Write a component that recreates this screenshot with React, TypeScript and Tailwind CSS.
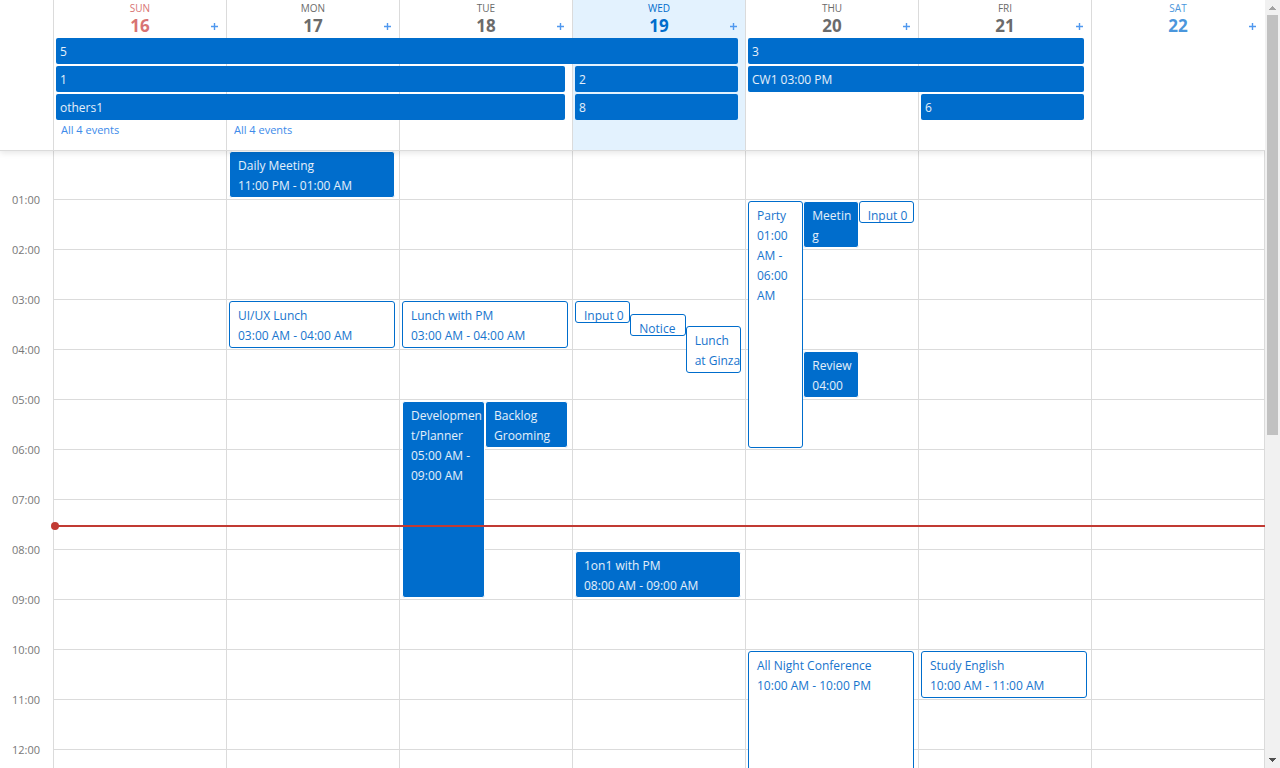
import { Fragment } from 'react';

type Day = { name: string; date: number; tone: string; head: string; more?: string };
type AllDay = { title: string; start: number; span: number; row: number };
type CalEvent = {
  title: string;
  time?: string;
  start: number;
  length: number;
  track: number;
  tracks: number;
  filled?: boolean;
};

const DAYS: Day[] = [
  { name: 'SUN', date: 16, tone: 'text-[#d87373]', head: 'bg-white', more: 'All 4 events' },
  { name: 'MON', date: 17, tone: 'text-[#6b6b6b]', head: 'bg-white', more: 'All 4 events' },
  { name: 'TUE', date: 18, tone: 'text-[#6b6b6b]', head: 'bg-white' },
  { name: 'WED', date: 19, tone: 'text-[#006dcc]', head: 'bg-[#e3f2fe]' },
  { name: 'THU', date: 20, tone: 'text-[#6b6b6b]', head: 'bg-white' },
  { name: 'FRI', date: 21, tone: 'text-[#6b6b6b]', head: 'bg-white' },
  { name: 'SAT', date: 22, tone: 'text-[#4a96dc]', head: 'bg-white' },
];

const ALL_DAY: AllDay[] = [
  { title: '5', start: 1, span: 4, row: 2 },
  { title: '3', start: 5, span: 2, row: 2 },
  { title: '1', start: 1, span: 3, row: 3 },
  { title: '2', start: 4, span: 1, row: 3 },
  { title: 'CW1 03:00 PM', start: 5, span: 2, row: 3 },
  { title: 'others1', start: 1, span: 3, row: 4 },
  { title: '8', start: 4, span: 1, row: 4 },
  { title: '6', start: 6, span: 1, row: 4 },
];

const EVENTS: CalEvent[][] = [
  [],
  [
    { title: 'Daily Meeting', time: '11:00 PM - 01:00 AM', start: 0, length: 1, track: 0, tracks: 1, filled: true },
    { title: 'UI/UX Lunch', time: '03:00 AM - 04:00 AM', start: 3, length: 1, track: 0, tracks: 1 },
  ],
  [
    { title: 'Lunch with PM', time: '03:00 AM - 04:00 AM', start: 3, length: 1, track: 0, tracks: 1 },
    { title: 'Development/Planner', time: '05:00 AM - 09:00 AM', start: 5, length: 4, track: 0, tracks: 2, filled: true },
    { title: 'Backlog Grooming', start: 5, length: 1, track: 1, tracks: 2, filled: true },
  ],
  [
    { title: 'Input 0', start: 3, length: 0.5, track: 0, tracks: 3 },
    { title: 'Notice', start: 3.25, length: 0.5, track: 1, tracks: 3 },
    { title: 'Lunch\nat Ginza', start: 3.5, length: 1, track: 2, tracks: 3 },
    { title: '1on1 with PM', time: '08:00 AM - 09:00 AM', start: 8, length: 1, track: 0, tracks: 1, filled: true },
  ],
  [
    { title: 'Party', time: '01:00 AM - 06:00 AM', start: 1, length: 5, track: 0, tracks: 3 },
    { title: 'Meeting', start: 1, length: 1, track: 1, tracks: 3, filled: true },
    { title: 'Input 0', start: 1, length: 0.5, track: 2, tracks: 3 },
    { title: 'Review', time: '04:00', start: 4, length: 1, track: 1, tracks: 3, filled: true },
    { title: 'All Night Conference', time: '10:00 AM - 10:00 PM', start: 10, length: 12, track: 0, tracks: 1 },
  ],
  [{ title: 'Study English', time: '10:00 AM - 11:00 AM', start: 10, length: 1, track: 0, tracks: 1 }],
  [],
];

const HOURS = Array.from({ length: 12 }, (_, i) => `${String(i + 1).padStart(2, '0')}:00`);

function Header() {
  return (
    <header className="relative z-20 flex border-b border-[#dbdbdb] bg-white shadow-[0_2px_6px_rgba(0,0,0,0.1)]">
      <div className="w-[53px] shrink-0" />
      <div className="grid min-w-0 flex-1 grid-cols-7 grid-rows-[38px_28px_28px_28px_28px] pr-px">
        {DAYS.map((d, i) => (
          <Fragment key={d.name}>
            <div className={`row-span-full border-l border-[#dbdbdb] ${d.head}`} style={{ gridColumn: i + 1 }} />
            <div
              className={`row-start-1 grid grid-cols-[1fr_auto_1fr] content-start items-center pl-px text-center ${d.tone}`}
              style={{ gridColumn: i + 1 }}
            >
              <span className="col-span-3 text-[10px] leading-4">{d.name}</span>
              <span className="col-start-2 text-[17px] leading-5 font-bold">{d.date}</span>
              <button
                type="button"
                aria-label={`Add event on ${d.name} ${d.date}`}
                className="col-start-3 mr-1 flex size-4 items-center justify-center justify-self-end"
              >
                <svg width="7" height="7" viewBox="0 0 7 7" fill="none" stroke="#4f98ef" strokeWidth="1.4">
                  <path d="M3.5 0v7M0 3.5h7" />
                </svg>
              </button>
            </div>
            {d.more && (
              <a
                href="#all-events"
                className="row-start-5 mx-2 truncate text-[11px] leading-4 text-[#3d8bea]"
                style={{ gridColumn: i + 1 }}
              >
                {d.more}
              </a>
            )}
          </Fragment>
        ))}
        {ALL_DAY.map((e) => (
          <button
            type="button"
            key={e.title}
            className="mr-[7px] mb-[2px] ml-[3px] truncate rounded-xs bg-[#006dcc] px-1 pt-[2px] text-left text-xs text-white/90"
            style={{ gridColumn: `${e.start} / span ${e.span}`, gridRow: e.row }}
          >
            {e.title}
          </button>
        ))}
      </div>
    </header>
  );
}

function EventBox({ event }: { event: CalEvent }) {
  const width = 6 / event.tracks;
  const look = event.filled
    ? 'border-white bg-[#006dcc] text-white/90'
    : 'border-[#006dcc] bg-white text-[#1774cd]';
  const wrap = event.title.includes('\n') ? 'whitespace-pre' : '[overflow-wrap:anywhere]';
  return (
    <button
      type="button"
      className={`mt-px mb-[2px] flex min-w-0 flex-col items-stretch overflow-hidden rounded-[3px] border pt-1 pl-2 text-left text-xs leading-5 ${wrap} ${look}`}
      style={{
        gridColumn: `${event.track * width + 1} / span ${width}`,
        gridRow: `${event.start * 4 + 1} / span ${event.length * 4}`,
      }}
    >
      <span>{event.title}</span>
      {event.time && <span>{event.time}</span>}
    </button>
  );
}

function WeekBody() {
  return (
    <div className="relative -mt-px flex">
      <div className="w-[53px] shrink-0 pt-10 pr-[13px] text-right text-[11px] leading-5 text-[#777777]">
        {HOURS.map((h) => (
          <div key={h} className="h-[50px]">
            {h}
          </div>
        ))}
      </div>
      <div className="relative grid min-w-0 flex-1 grid-cols-7 border-r border-[#dbdbdb] bg-[repeating-linear-gradient(to_bottom,transparent_0_49px,#dbdbdb_49px_50px)]">
        {EVENTS.map((list, i) => (
          <div
            key={DAYS[i].name}
            className="grid h-[1200px] grid-cols-[repeat(6,minmax(0,1fr))] grid-rows-[repeat(96,minmax(0,1fr))] border-l border-[#dbdbdb] pr-1 pl-[2px]"
          >
            {list.map((e) => (
              <EventBox key={e.title + e.start} event={e} />
            ))}
          </div>
        ))}
        <div className="absolute top-[375px] -right-px left-0 h-[2px] bg-[#c13a33]">
          <span className="absolute -top-[3px] -left-[2px] size-2 rounded-full bg-[#c13a33]" />
        </div>
      </div>
    </div>
  );
}

function ScrollRail() {
  return (
    <div aria-hidden="true" className="flex w-[15px] shrink-0 flex-col items-center bg-[#f1f1f1]">
      <svg width="15" height="15" viewBox="0 0 15 15" fill="#a3a3a3">
        <path d="M7 6h1v1h1v1h1v1h1v1H4V9h1V8h1V7h1z" />
      </svg>
      <div className="flex w-[11px] flex-1 flex-col">
        <div className="h-[56.9%] bg-[#c1c1c1]" />
      </div>
      <svg width="15" height="15" viewBox="0 0 15 15" fill="#505050">
        <path d="M4 5h7v1h-1v1H9v1H8v1H7V8H6V7H5V6H4z" />
      </svg>
    </div>
  );
}

export default function App() {
  return (
    <div className="flex h-screen overflow-hidden bg-white font-['Open_Sans','Noto_Sans',sans-serif]">
      <main className="min-w-0 flex-1 overflow-hidden">
        <Header />
        <WeekBody />
      </main>
      <ScrollRail />
    </div>
  );
}
